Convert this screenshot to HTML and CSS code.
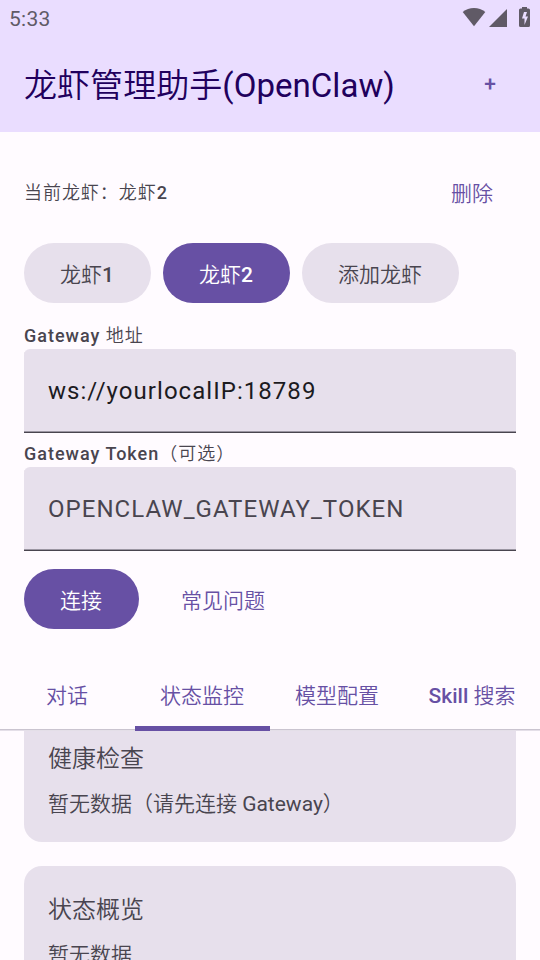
FILE: index.html
```html
<!DOCTYPE html>
<html lang="zh-CN">
<head>
<meta charset="utf-8">
<title>龙虾管理助手(OpenClaw)</title>
<link rel="stylesheet" href="styles.css">
</head>
<body>
<header class="header">
  <div class="status">
    <span class="time">5:33</span>
    <svg class="indicators" width="72" height="28" viewBox="460 0 72 28" fill="#605a66">
      <path d="M462.700 12C469 6.600 479 6.600 485.300 12L474 26.200z"/>
      <path d="M507 9v18h-18z"/>
      <path d="M520.500 8.500h1.500V7h5v1.500h1.500q1.500 0 1.500 1.500v15.500q0 1.500-1.500 1.500h-8q-1.500 0-1.500-1.500V10q0-1.500 1.500-1.500z"/>
      <path d="M524 12l-2 6.500h2.500V25l3.500-8.500h-2.500l1.500-4.500z" fill="#eaddff"/>
    </svg>
  </div>
  <div class="appbar"><h1>龙虾管理助手<span class="latin">(OpenClaw)</span></h1><button class="plus">+</button></div>
</header>
<main class="form">
  <div class="current"><span>当前龙虾：龙虾<b>2</b></span><button class="link">删除</button></div>
  <div class="chips"><button class="chip">龙虾<b>1</b></button><button class="chip active">龙虾<b>2</b></button><button class="chip wide">添加龙虾</button></div>
  <label class="label"><b>Gateway</b> 地址</label>
  <div class="field">ws://yourlocalIP:18789</div>
  <label class="label second"><b>Gateway Token</b>（可选）</label>
  <div class="field hint">OPENCLAW_GATEWAY_TOKEN</div>
  <div class="actions"><button class="chip active connect">连接</button><button class="link">常见问题</button></div>
</main>
<nav class="tabs"><span class="tab">对话</span><span class="tab selected">状态监控</span><span class="tab">模型配置</span><span class="tab"><b>Skill</b> 搜索</span></nav>
<section class="cards">
  <article class="card first"><h2>健康检查</h2><p>暂无数据（请先连接 <span class="latin">Gateway</span>）</p></article>
  <article class="card last"><h2>状态概览</h2><p>暂无数据</p></article>
</section>
</body>
</html>
```
FILE: styles.css
```css
* { box-sizing: border-box; }
body { margin: 0; width: 540px; height: 960px; overflow: hidden; display: flex; flex-direction: column; background: #fffbff; color: #49454f; font-family: Roboto, "Noto Sans CJK SC", sans-serif; font-weight: 350; }
button { border: 0; padding: 0; background: none; font: inherit; color: inherit; }
b { font-weight: 500; }
.latin { font-weight: 400; }
.header { height: 132px; flex: none; background: #eaddff; }
.status { height: 36px; display: flex; justify-content: space-between; padding: 0 8px 0 9px; }
.time { font-size: 21px; line-height: 38px; color: #605a66; letter-spacing: .3px; font-weight: 400; }
.indicators { display: block; }
.appbar { height: 94px; display: flex; align-items: center; justify-content: space-between; padding: 0 44px 0 24px; }
h1 { margin: 0; font-size: 33px; font-weight: 350; color: #21005d; white-space: nowrap; letter-spacing: .05px; }
.plus { font-size: 21px; font-weight: 500; color: #6750a4; padding-top: 2px; }
.form { height: 529px; flex: none; padding: 30px 24px 0; }
.current { height: 60px; display: flex; align-items: center; justify-content: space-between; font-size: 18px; letter-spacing: .95px; }
.current > span { margin-top: -2px; }
.link { color: #6750a4; font-size: 21px; letter-spacing: 0; margin-right: 23px; }
.chips { display: flex; gap: 12px; margin-top: 21px; }
.chip { width: 127px; height: 60px; padding-right: 1px; border-radius: 30px; background: #e7e0ec; font-size: 21px; }
.wide { width: 157px; }
.connect { width: 115px; }
.active { background: #6750a4; color: #fff; }
.label { display: block; height: 24px; line-height: 22px; margin-top: 22px; font-size: 18px; letter-spacing: 1px; }
.second { margin-top: 10px; }
.field { height: 84px; line-height: 85px; padding-left: 24px; background: #e7e0ec; border-radius: 6px 6px 0 0; border-bottom: 1px solid #49454f; box-shadow: inset 0 -1px #9b96a2; color: #1c1b1f; font-size: 24px; letter-spacing: 1.04px; font-weight: 400; }
.hint { color: #49454f; }
.actions { display: flex; gap: 42px; margin-top: 18px; }
.tabs { height: 69px; flex: none; display: grid; grid-template-columns: repeat(4, 135px); border-bottom: 1px solid #cac4d0; box-shadow: 0 1px #e4dfe8; position: relative; }
.tab { height: 70px; line-height: 70px; padding-right: 1px; text-align: center; color: #6750a4; font-size: 21px; white-space: nowrap; }
.selected { border-bottom: 5px solid #6750a4; position: relative; }
.cards { flex: 1; min-height: 0; display: flex; flex-direction: column; gap: 24px; padding: 0 24px; overflow: hidden; }
.card { flex: none; padding: 24px; border-radius: 18px; background: #e7e0ec; }
.first { height: 112px; padding-top: 11px; border-radius: 0 0 18px 18px; }
.last { flex: 1; min-height: 0; padding-top: 26px; padding-bottom: 0; border-radius: 18px 18px 0 0; }
h2 { margin: 0; font-size: 24px; line-height: 36px; font-weight: inherit; }
p { margin: 12px 0 0; font-size: 21px; line-height: 30px; }
```
